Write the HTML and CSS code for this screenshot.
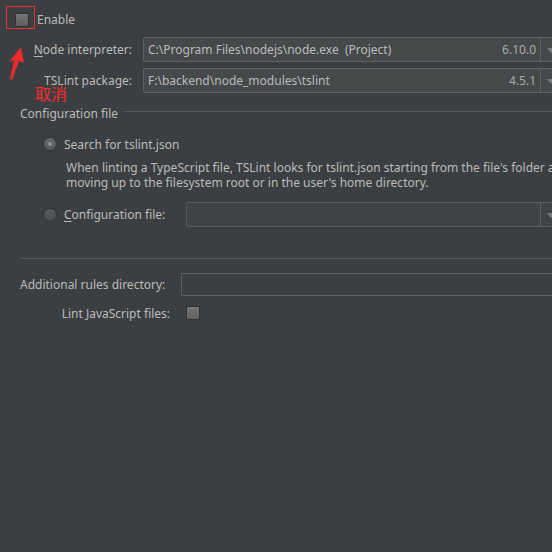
FILE: index.html
```html
<!DOCTYPE html>
<html>
<head>
<meta charset="utf-8">
<link rel="stylesheet" href="styles.css">
</head>
<body>
<div class="page">
  <div class="enable-row">
    <span class="cb"></span>
    <span class="txt">Enable</span>
    <span class="mark-box"></span>
  </div>

  <div class="field-row node-row">
    <span class="flabel"><u>N</u>ode interpreter:</span>
    <div class="combo">
      <span class="val">C:\Program Files\nodejs\node.exe&nbsp;&nbsp;(Project)</span>
      <span class="ver">6.10.0</span>
      <span class="drop"></span>
    </div>
  </div>

  <div class="field-row pkg-row">
    <span class="flabel">TSLint package:</span>
    <div class="combo">
      <span class="val">F:\backend\node_modules\tslint</span>
      <span class="ver">4.5.1</span>
      <span class="drop"></span>
    </div>
    <span class="cancel">取消</span>
  </div>

  <svg class="arrow" width="30" height="40" viewBox="0 0 30 40">
    <polygon points="21,1 24,17 19,15 12,34 10,33 14,14 9,16" fill="#ec2b2b"/>
  </svg>

  <div class="group-title">
    <span>Configuration file</span>
    <span class="rule"></span>
  </div>

  <div class="radio-row r1">
    <span class="radio on"></span>
    <span class="txt">Search for tslint.json</span>
  </div>
  <div class="desc">When linting a TypeScript file, TSLint looks for tslint.json starting from the file's folder and then<br>moving up to the filesystem root or in the user's home directory.</div>

  <div class="radio-row r2">
    <span class="radio"></span>
    <span class="txt rlabel"><u>C</u>onfiguration file:</span>
    <div class="combo disabled">
      <span class="val"></span>
      <span class="drop"></span>
    </div>
  </div>

  <div class="sep"></div>

  <div class="add-row">
    <span class="txt">Additional rules directory:</span>
    <div class="tfield"></div>
  </div>

  <div class="lint-row">
    <span class="llabel">Lint JavaScript files:</span>
    <span class="cb small"></span>
  </div>
</div>
</body>
</html>
```

FILE: styles.css
```css
html, body {
  margin: 0;
  padding: 0;
  background: #3c3f41;
  overflow: hidden;
  width: 552px;
  height: 552px;
}
.page {
  position: relative;
  font-family: "Noto Sans", "Open Sans", sans-serif;
  font-size: 12px;
  color: #bbbbbb;
  width: 552px;
  overflow: hidden;
  height: 552px;
}
u { text-decoration: underline; text-underline-offset: 2px; }
.txt { white-space: nowrap; flex: none; }

.cb {
  display: inline-block;
  width: 14px;
  height: 14px;
  box-sizing: border-box;
  border: 1px solid #2f3133;
  border-radius: 2px;
  background: linear-gradient(#767676, #606060);
  box-shadow: inset 0 1px 0 #7e7e7e;
  flex: none;
}

.enable-row {
  position: relative;
  display: flex;
  align-items: center;
  height: 25px;
  margin-top: 7px;
  padding-left: 15px;
  gap: 8px;
}
.mark-box {
  position: absolute;
  left: 6px;
  top: -1px;
  width: 29px;
  height: 23px;
  box-sizing: border-box;
  border: 1px solid #e8322f;
}

.field-row {
  position: relative;
  display: flex;
  align-items: center;
  height: 25px;
}
.node-row { margin-top: 5px; }
.pkg-row { margin-top: 6px; }
.flabel {
  width: 132px;
  text-align: right;
  flex: none;
  white-space: nowrap;
}
.combo {
  position: relative;
  display: flex;
  align-items: center;
  margin-left: 11px;
  width: 420px;
  height: 25px;
  box-sizing: border-box;
  border: 1px solid #5e6162;
  border-radius: 2px;
  background: #45494a;
  flex: none;
}
.combo .val {
  flex: 1;
  padding-left: 4px;
  white-space: nowrap;
}
.combo .ver {
  padding-right: 4px;
  color: #a9a9a9;
}
.combo .drop {
  width: 21px;
  height: 100%;
  border-left: 1px solid #5e6162;
  position: relative;
  flex: none;
}
.combo .drop::after {
  content: "";
  position: absolute;
  left: 6px;
  top: 10px;
  border-left: 4px solid transparent;
  border-right: 4px solid transparent;
  border-top: 5px solid #76797b;
}
.combo.disabled {
  margin-left: 21px;
  width: 377px;
  background: #414446;
  border-color: #595c5e;
}

.cancel {
  position: absolute;
  left: 35px;
  top: 16px;
  font-family: "Noto Sans CJK SC", sans-serif;
  font-size: 16px;
  line-height: 18px;
  color: #ff2b2b;
}
.arrow {
  position: absolute;
  left: 0;
  top: 46px;
}

.group-title {
  display: flex;
  align-items: center;
  margin-top: 12px;
  margin-left: 20px;
  height: 16px;
}
.group-title .rule {
  flex: 1;
  height: 1px;
  background: #555759;
  margin-left: 5px;
  margin-top: -3px;
}

.radio-row {
  display: flex;
  align-items: center;
  padding-left: 43px;
}
.radio {
  display: inline-block;
  width: 14px;
  height: 14px;
  box-sizing: border-box;
  border-radius: 50%;
  border: 1px solid #303234;
  background: linear-gradient(#5a5c5e, #4b4d4f);
  position: relative;
  flex: none;
}
.radio.on {
  background: linear-gradient(#68696b, #57595b);
}
.radio.on::after {
  content: "";
  position: absolute;
  left: 4px;
  top: 4px;
  width: 4px;
  height: 4px;
  border-radius: 50%;
  background: #8f9193;
}
.r1 {
  height: 16px;
  margin-top: 15px;
}
.r1 .txt { margin-left: 7px; }
.desc {
  margin-top: 8px;
  margin-left: 66px;
  line-height: 15px;
  white-space: nowrap;
}
.r2 {
  height: 25px;
  margin-top: 12px;
}
.r2 .rlabel { margin-left: 7px; }

.sep {
  margin-top: 31px;
  margin-left: 20px;
  height: 1px;
  background: #555759;
}

.add-row {
  display: flex;
  align-items: center;
  margin-top: 14px;
  margin-left: 20px;
  height: 23px;
}
.tfield {
  margin-left: 16px;
  width: 390px;
  height: 23px;
  box-sizing: border-box;
  border: 1px solid #5b5d5f;
  background: #3c3f41;
  flex: none;
}

.lint-row {
  display: flex;
  align-items: center;
  height: 16px;
  margin-top: 9px;
}
.llabel {
  width: 170px;
  text-align: right;
  white-space: nowrap;
  flex: none;
}
.cb.small {
  margin-left: 16px;
}
```
